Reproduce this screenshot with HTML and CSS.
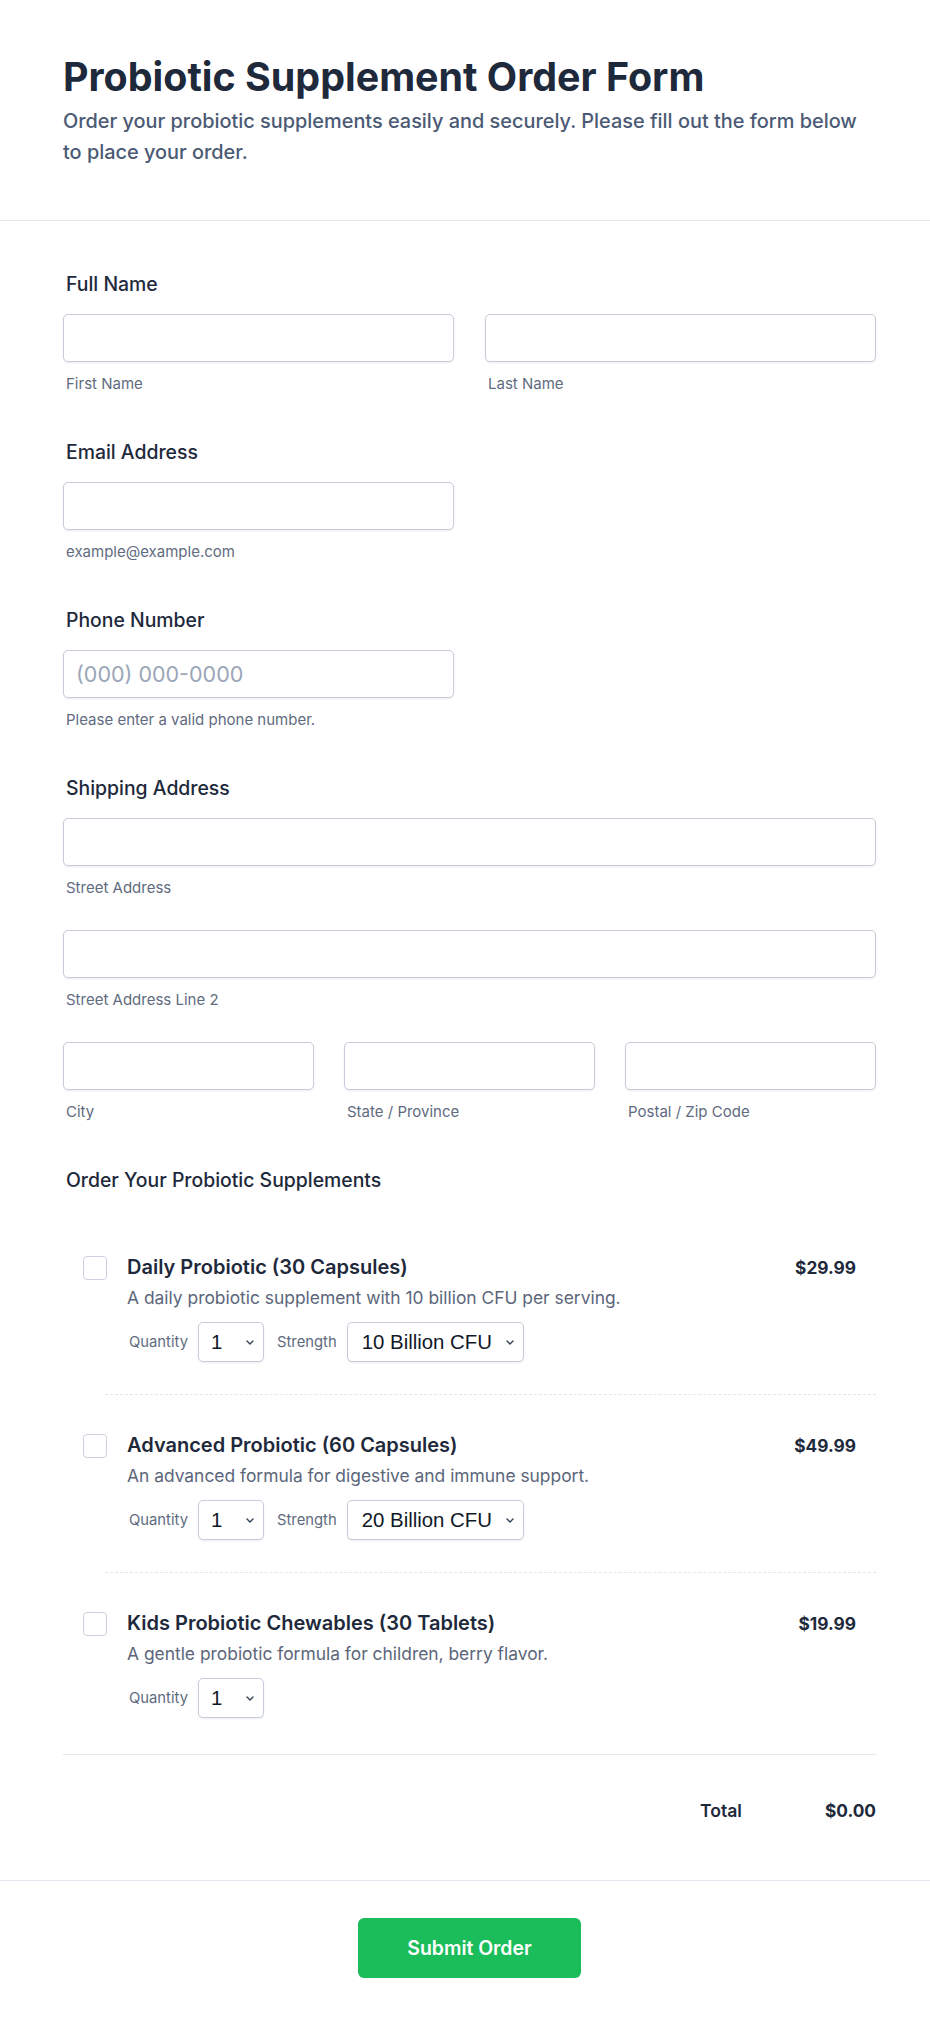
FILE: index.html
```html
<!DOCTYPE html>
<html lang="en">

<head>
    <meta charset="UTF-8">
    <meta name="viewport" content="width=device-width, initial-scale=1.0">
    <title>Probiotic Supplement Order Form</title>
    <link rel="stylesheet" href="styles.css">
</head>

<body>

    <header class="page-header">
        <h1>Probiotic Supplement Order Form</h1>
        <p class="intro">Order your probiotic supplements easily and securely. Please fill out the form below to place your order.</p>
    </header>

    <form class="order-form" action="#" method="POST">
        <div class="form-body">

            <div class="field">
                <label class="field-label">Full Name</label>
                <div class="cols-2">
                    <div>
                        <input type="text" name="first_name">
                        <p class="sublabel">First Name</p>
                    </div>
                    <div>
                        <input type="text" name="last_name">
                        <p class="sublabel">Last Name</p>
                    </div>
                </div>
            </div>

            <div class="field">
                <label class="field-label" for="email">Email Address</label>
                <div class="cols-2">
                    <div>
                        <input type="email" id="email" name="email">
                        <p class="sublabel">example@example.com</p>
                    </div>
                </div>
            </div>

            <div class="field">
                <label class="field-label" for="phone">Phone Number</label>
                <div class="cols-2">
                    <div>
                        <input type="tel" id="phone" name="phone" placeholder="(000) 000-0000">
                        <p class="sublabel">Please enter a valid phone number.</p>
                    </div>
                </div>
            </div>

            <div class="field">
                <label class="field-label">Shipping Address</label>
                <div class="address-row">
                    <input type="text" name="street">
                    <p class="sublabel">Street Address</p>
                </div>
                <div class="address-row">
                    <input type="text" name="street2">
                    <p class="sublabel">Street Address Line 2</p>
                </div>
                <div class="cols-3">
                    <div>
                        <input type="text" name="city">
                        <p class="sublabel">City</p>
                    </div>
                    <div>
                        <input type="text" name="state">
                        <p class="sublabel">State / Province</p>
                    </div>
                    <div>
                        <input type="text" name="zip">
                        <p class="sublabel">Postal / Zip Code</p>
                    </div>
                </div>
            </div>

            <div class="products">
                <label class="field-label">Order Your Probiotic Supplements</label>

                <div class="product-list">
                    <div class="product">
                        <input type="checkbox" class="check" name="daily">
                        <div class="product-info">
                            <div class="product-head">
                                <h4>Daily Probiotic (30 Capsules)</h4>
                                <span class="price">$29.99</span>
                            </div>
                            <p class="desc">A daily probiotic supplement with 10 billion CFU per serving.</p>
                            <div class="options">
                                <span class="opt-label">Quantity</span>
                                <div class="select qty">
                                    <select name="daily_qty">
                                        <option>1</option>
                                        <option>2</option>
                                        <option>3</option>
                                    </select>
                                    <svg viewBox="0 0 8 5" width="8" height="5"><path d="M1 1l3 3 3-3" /></svg>
                                </div>
                                <span class="opt-label">Strength</span>
                                <div class="select strength">
                                    <select name="daily_strength">
                                        <option>10 Billion CFU</option>
                                        <option>20 Billion CFU</option>
                                    </select>
                                    <svg viewBox="0 0 8 5" width="8" height="5"><path d="M1 1l3 3 3-3" /></svg>
                                </div>
                            </div>
                        </div>
                    </div>

                    <hr class="product-sep">

                    <div class="product">
                        <input type="checkbox" class="check" name="advanced">
                        <div class="product-info">
                            <div class="product-head">
                                <h4>Advanced Probiotic (60 Capsules)</h4>
                                <span class="price">$49.99</span>
                            </div>
                            <p class="desc">An advanced formula for digestive and immune support.</p>
                            <div class="options">
                                <span class="opt-label">Quantity</span>
                                <div class="select qty">
                                    <select name="advanced_qty">
                                        <option>1</option>
                                        <option>2</option>
                                        <option>3</option>
                                    </select>
                                    <svg viewBox="0 0 8 5" width="8" height="5"><path d="M1 1l3 3 3-3" /></svg>
                                </div>
                                <span class="opt-label">Strength</span>
                                <div class="select strength">
                                    <select name="advanced_strength">
                                        <option>20 Billion CFU</option>
                                        <option>50 Billion CFU</option>
                                    </select>
                                    <svg viewBox="0 0 8 5" width="8" height="5"><path d="M1 1l3 3 3-3" /></svg>
                                </div>
                            </div>
                        </div>
                    </div>

                    <hr class="product-sep">

                    <div class="product">
                        <input type="checkbox" class="check" name="kids">
                        <div class="product-info">
                            <div class="product-head">
                                <h4>Kids Probiotic Chewables (30 Tablets)</h4>
                                <span class="price">$19.99</span>
                            </div>
                            <p class="desc">A gentle probiotic formula for children, berry flavor.</p>
                            <div class="options">
                                <span class="opt-label">Quantity</span>
                                <div class="select qty">
                                    <select name="kids_qty">
                                        <option>1</option>
                                        <option>2</option>
                                        <option>3</option>
                                    </select>
                                    <svg viewBox="0 0 8 5" width="8" height="5"><path d="M1 1l3 3 3-3" /></svg>
                                </div>
                            </div>
                        </div>
                    </div>
                </div>

                <div class="total">
                    <span class="total-label">Total</span>
                    <span class="total-value">$0.00</span>
                </div>
            </div>

        </div>

        <div class="form-footer">
            <button type="submit">Submit Order</button>
        </div>
    </form>

</body>

</html>
```

FILE: styles.css
```css
* {
    box-sizing: border-box;
}

body {
    margin: 0;
    background: #fff;
    color: #1e293b;
    font-family: 'Inter', sans-serif;
}

h1,
h4,
p {
    margin: 0;
    padding: 0;
}

.page-header {
    padding: 57px 54px 52px 63px;
    border-bottom: 1px solid #e2e8f0;
}

.page-header h1 {
    font-size: 39.4px;
    line-height: 40px;
    font-weight: 700;
    color: #1e293b;
}

.page-header .intro {
    margin-top: 9px;
    font-size: 19.9px;
    line-height: 31px;
    font-weight: 500;
    color: #4b5a74;
}

.form-body {
    padding: 49px 54px 55px 63px;
}

.field {
    margin-bottom: 44px;
}

.field-label {
    display: block;
    margin-bottom: 16px;
    margin-left: 3px;
    font-size: 19.4px;
    line-height: 28px;
    font-weight: 500;
    color: #1e293b;
}

input[type="text"],
input[type="email"],
input[type="tel"] {
    display: block;
    width: 100%;
    height: 48px;
    padding: 0 12px;
    border: 1px solid #c6ccd8;
    border-radius: 5px;
    box-shadow: 0 1px 2px rgba(15, 23, 42, 0.08);
    font-family: inherit;
    font-size: 21.5px;
    color: #1e293b;
    background: #fff;
}

input::placeholder {
    color: #9aa6b8;
}

.sublabel {
    margin-top: 12px;
    margin-left: 3px;
    font-size: 15px;
    line-height: 20px;
    color: #5f6b80;
}

.cols-2 {
    display: grid;
    grid-template-columns: 1fr 1fr;
    column-gap: 31px;
}

.cols-3 {
    display: grid;
    grid-template-columns: 1fr 1fr 1fr;
    column-gap: 30px;
}

.address-row {
    margin-bottom: 32px;
}

/* product list */
.product-list {
    margin-top: 23px;
}

.product {
    display: flex;
    gap: 20px;
    padding: 36px 20px 32px 20px;
}

.product:last-child {
    padding-bottom: 36px;
}

.check {
    appearance: none;
    flex: none;
    width: 24px;
    height: 24px;
    margin: 3px 0 0 0;
    border: 1px solid #cbd2dd;
    border-radius: 4px;
    background: #fff;
}

.product-info {
    flex: 1;
}

.product-head {
    display: flex;
    justify-content: space-between;
    align-items: baseline;
}

.product-head h4 {
    font-size: 20px;
    line-height: 28px;
    font-weight: 600;
    color: #1e293b;
}

.price {
    font-size: 17.3px;
    line-height: 28px;
    font-weight: 700;
    color: #1e293b;
}

.desc {
    margin-top: 2px;
    font-size: 17.4px;
    line-height: 28px;
    color: #5b667a;
}

.options {
    display: flex;
    align-items: center;
    margin-top: 10px;
    margin-left: 2px;
}

.opt-label {
    margin-right: 10px;
    font-size: 14.8px;
    color: #5f6b80;
}

.select {
    position: relative;
    margin-right: 13px;
}

.select select {
    appearance: none;
    display: block;
    height: 40px;
    padding: 0 28px 0 12px;
    border: 1px solid #c6ccd8;
    border-radius: 5px;
    background: #fff;
    box-shadow: 0 1px 2px rgba(15, 23, 42, 0.08);
    font-family: 'Liberation Sans', Arial, sans-serif;
    font-size: 20.4px;
    color: #111827;
}

.select.qty select {
    width: 66px;
}

.select.strength select {
    width: 177px;
    padding-left: 14px;
}

.select svg {
    position: absolute;
    right: 10px;
    top: 18px;
    fill: none;
    stroke: #334155;
    stroke-width: 1.4;
    stroke-linecap: round;
    stroke-linejoin: round;
    pointer-events: none;
}

.product-sep {
    margin: 0 0 0 42px;
    border: none;
    border-top: 1px dashed #e2e6ec;
}

.total {
    display: flex;
    justify-content: flex-end;
    align-items: baseline;
    gap: 83px;
    padding-top: 42px;
    border-top: 1px solid #e2e6ee;
}

.total-label {
    font-size: 17.6px;
    line-height: 28px;
    font-weight: 600;
    color: #1e293b;
}

.total-value {
    font-size: 17.3px;
    line-height: 28px;
    font-weight: 700;
    color: #1e293b;
}

.form-footer {
    display: flex;
    justify-content: center;
    padding: 37px 54px 48px 63px;
    border-top: 1px solid #e2e8f0;
}

.form-footer button {
    padding: 16px 49px;
    border: none;
    border-radius: 6px;
    background-color: #1bbd5b;
    color: #fff;
    font-family: inherit;
    font-size: 19.4px;
    line-height: 28px;
    font-weight: 600;
    cursor: pointer;
}
```
